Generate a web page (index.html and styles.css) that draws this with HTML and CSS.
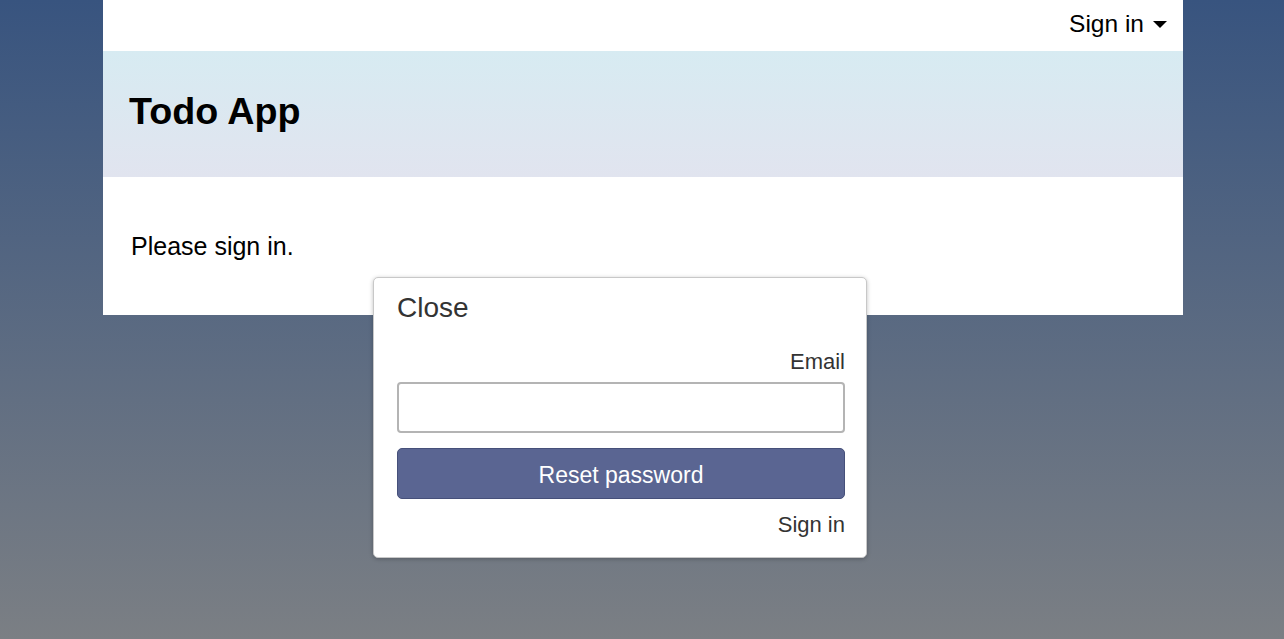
FILE: index.html
```html
<!DOCTYPE html>
<html>
<head>
<meta charset="utf-8">
<link rel="stylesheet" href="styles.css">
</head>
<body>
<div class="app">
  <div class="topbar">
    <button class="signin-toggle">Sign in <span class="caret"></span></button>
  </div>
  <header class="hero">
    <h1>Todo App</h1>
  </header>
  <main class="content">
    <p>Please sign in.</p>
  </main>
  <div class="popover">
    <div class="close">Close</div>
    <label class="label" for="email">Email</label>
    <input id="email" class="input" type="email">
    <button class="btn">Reset password</button>
    <a class="link">Sign in</a>
  </div>
</div>
</body>
</html>
```
FILE: styles.css
```css
html, body {
  margin: 0;
  padding: 0;
  height: 100%;
}
body {
  font-family: "Liberation Sans", Arial, sans-serif;
  background: linear-gradient(to bottom, #38547f 0%, #7b7f84 100%);
  min-height: 639px;
}
.app {
  position: relative;
  width: 1080px;
  margin: 0 auto;
  left: 1px;
}
.topbar {
  height: 51px;
  background: #fff;
  display: flex;
  justify-content: flex-end;
  align-items: center;
  padding-right: 16px;
}
.signin-toggle {
  border: 0;
  background: none;
  font: inherit;
  font-size: 24.5px;
  color: #000;
  padding: 0;
  display: flex;
  align-items: center;
  gap: 9px;
  margin-top: -4px;
}
.caret {
  width: 0;
  height: 0;
  border-left: 7px solid transparent;
  border-right: 7px solid transparent;
  border-top: 7px solid #000;
  margin-top: 2px;
}
.hero {
  height: 126px;
  background: linear-gradient(to bottom, #d7ebf2, #e1e4ef);
  display: flex;
  align-items: center;
  padding-left: 26px;
}
.hero h1 {
  margin: 0;
  font-size: 37.7px;
  font-weight: bold;
  color: #000;
  margin-top: -5px;
}
.content {
  height: 138px;
  background: #fff;
  padding: 0 28px;
  box-sizing: border-box;
}
.content p {
  margin: 0;
  padding-top: 55px;
  font-size: 25px;
  color: #000;
}
.popover {
  position: absolute;
  left: 270px;
  top: 277px;
  width: 494px;
  height: 281px;
  box-sizing: border-box;
  background: #fff;
  border: 1px solid #c8c8c8;
  border-radius: 5px;
  box-shadow: 0 1px 4px rgba(0,0,0,0.25);
  padding: 10px 21px 0 23px;
  display: flex;
  flex-direction: column;
  color: #333;
}
.close {
  font-size: 28px;
  line-height: 40px;
}
.label {
  font-size: 22px;
  text-align: right;
  margin-top: 21px;
  line-height: 26px;
}
.input {
  margin-top: 7px;
  height: 51px;
  flex: none;
  box-sizing: border-box;
  border: 2px solid #b4b4b4;
  border-radius: 4px;
  width: 100%;
  font-size: 20px;
}
.btn {
  margin-top: 15px;
  height: 51px;
  flex: none;
  box-sizing: border-box;
  width: 100%;
  background: #5a6592;
  border: 1px solid #46507a;
  border-radius: 5px;
  color: #fff;
  font-family: inherit;
  font-size: 23px;
  padding-top: 5px;
}
.link {
  font-size: 22px;
  text-align: right;
  margin-top: 13px;
  line-height: 26px;
  color: #333;
}
```
